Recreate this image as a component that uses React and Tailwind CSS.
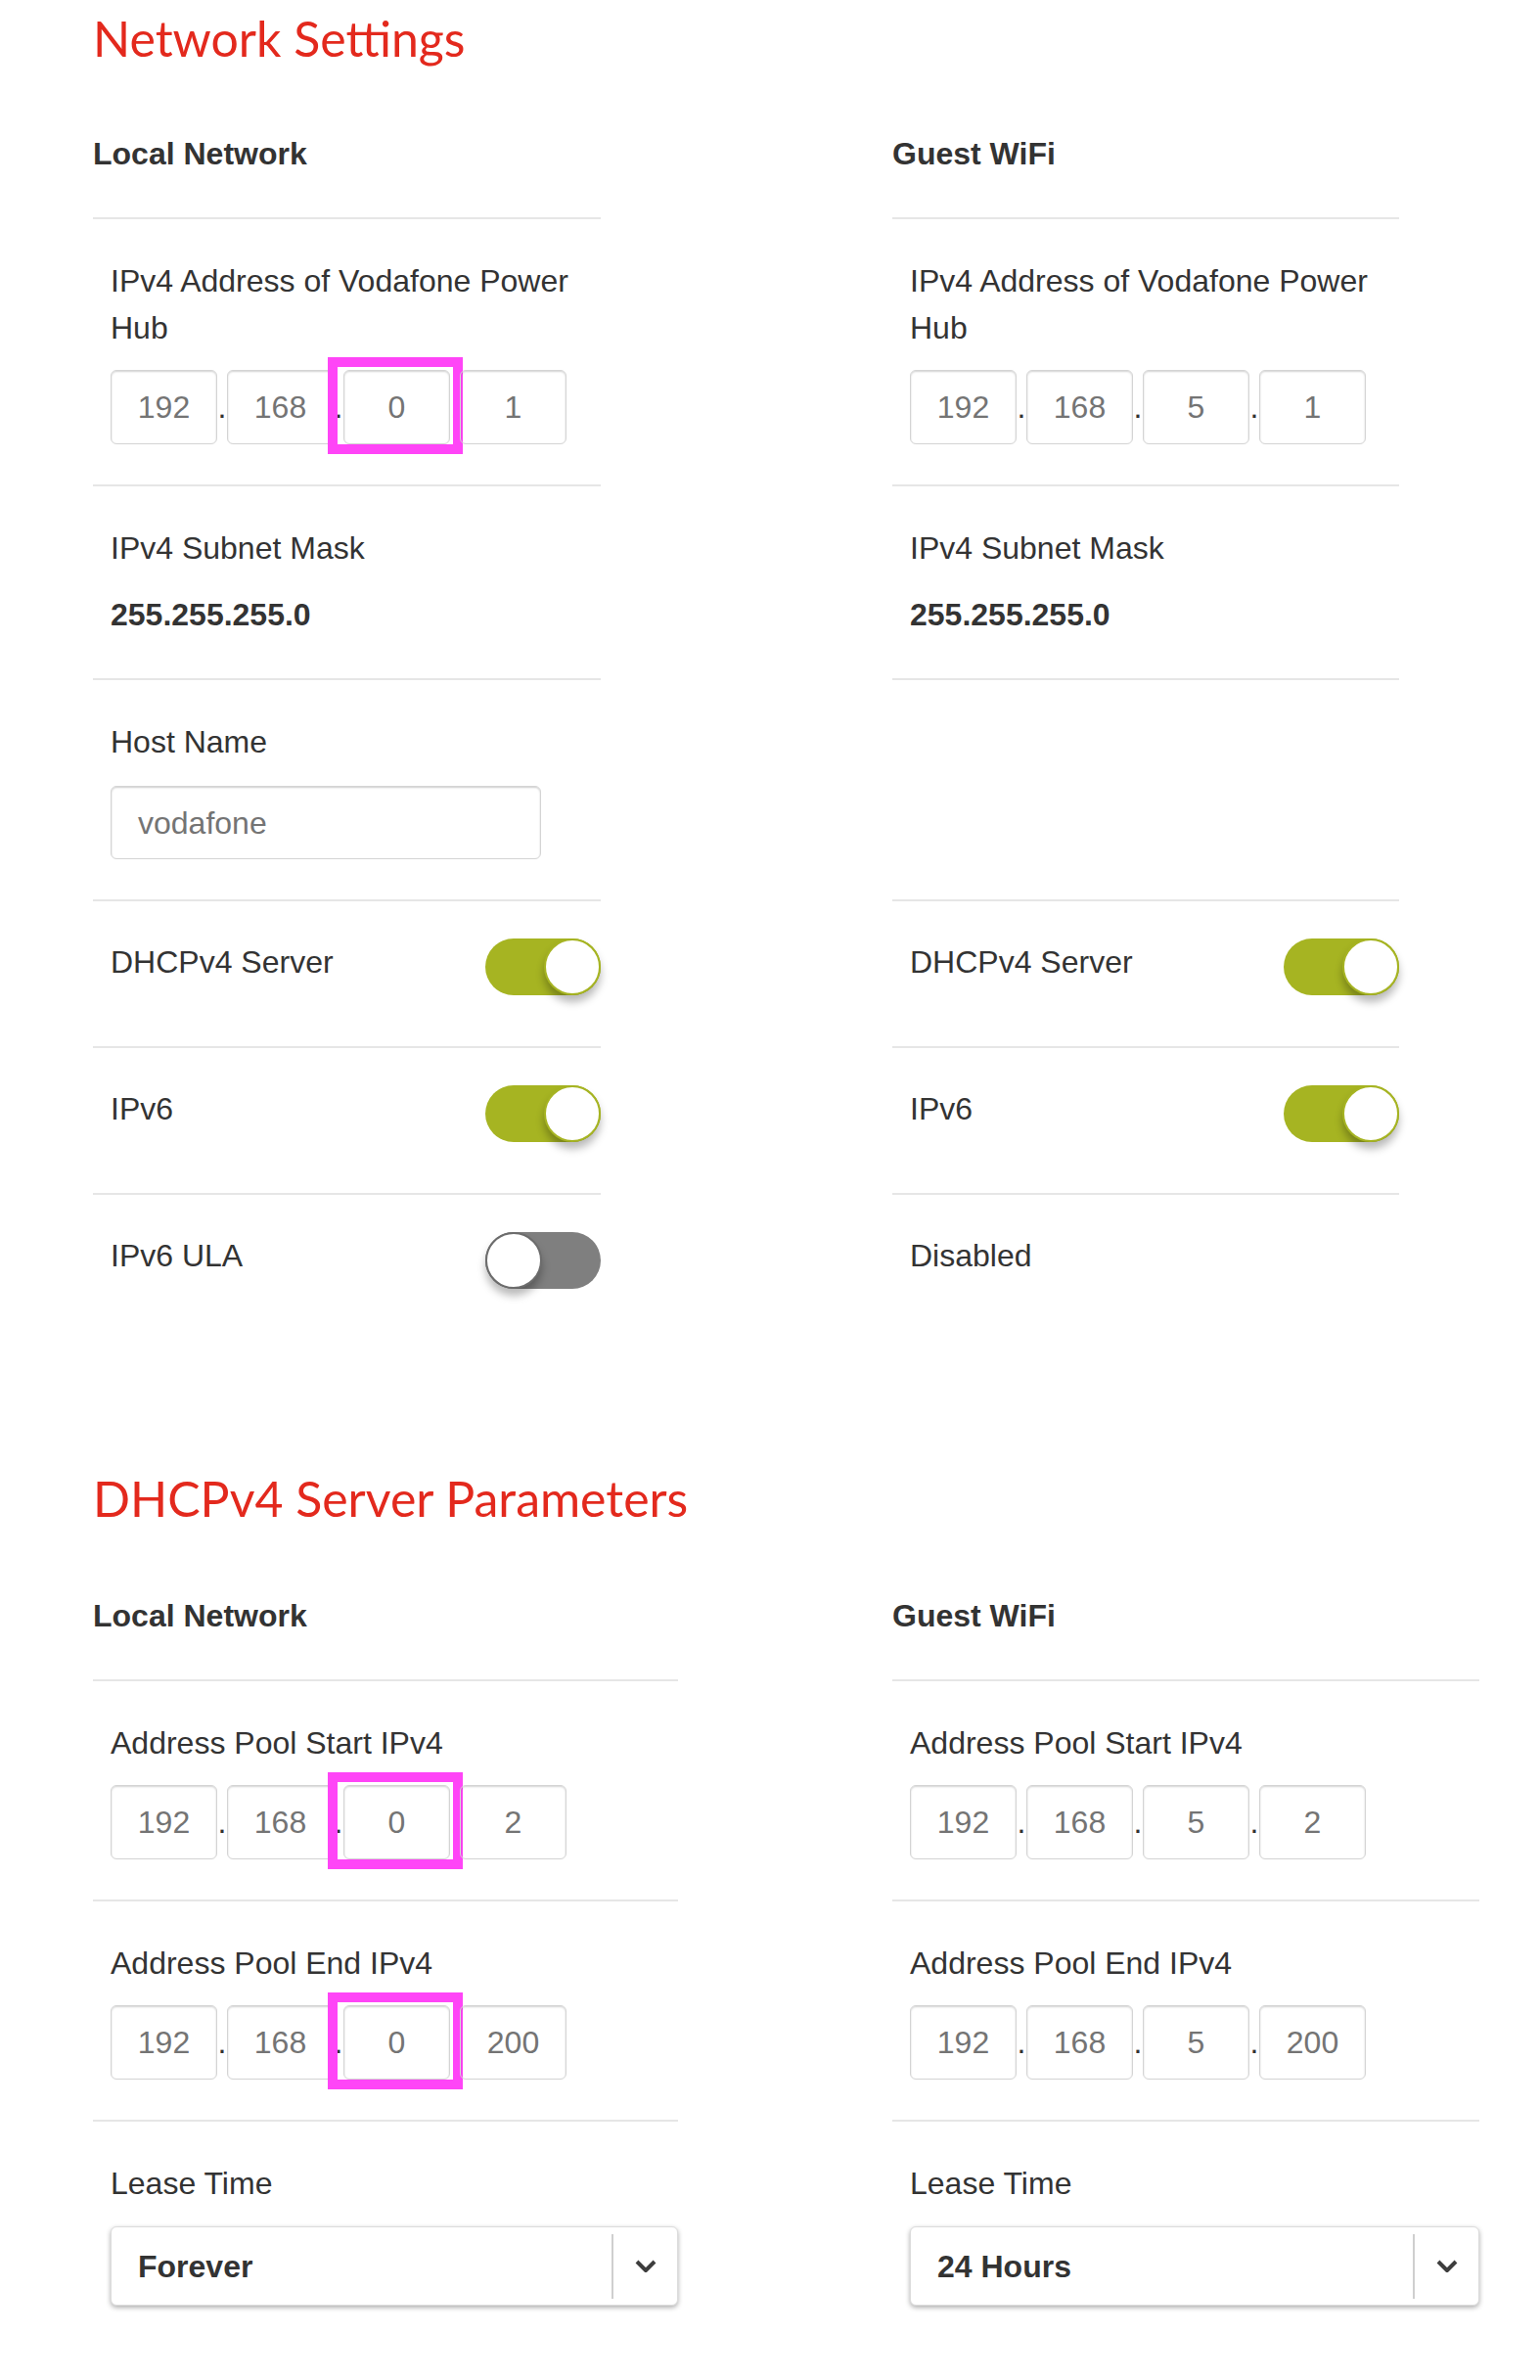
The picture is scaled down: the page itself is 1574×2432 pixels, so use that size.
import React from "react";

const sans = "font-['Liberation_Sans',Arial,sans-serif]";

const IpBox = ({ value, marked }) => (
  <div className="relative">
    <div className="w-[109px] h-[76px] rounded-[6px] border border-[#d4d4d4] shadow-[inset_0_1px_2px_rgba(0,0,0,0.18)] flex items-center justify-center text-[32px] text-[#747474]">
      {value}
    </div>
    {marked ? (
      <div className="absolute left-[-16px] right-[-13px] top-[-13px] bottom-[-10px] border-[10px] border-[#ff45f7]" />
    ) : null}
  </div>
);

const IpField = ({ parts, markThird }) => (
  <div className="flex items-baseline mt-[19px]">
    {parts.map((part, i) => (
      <React.Fragment key={i}>
        {i > 0 && (
          <span className="w-[10px] text-center text-[32px] leading-none text-[#333]">
            .
          </span>
        )}
        <IpBox value={part} marked={markThird && i === 2} />
      </React.Fragment>
    ))}
  </div>
);

const Toggle = ({ on }) => (
  <div
    className={
      on
        ? "w-[118px] h-[58px] rounded-full bg-[#a6b422] flex items-center justify-end shrink-0"
        : "w-[118px] h-[58px] rounded-full bg-[#7f7f7f] flex items-center justify-start shrink-0"
    }
  >
    <div
      className={
        on
          ? "w-[58px] h-[58px] rounded-full bg-white border-2 border-[#a6b422] shadow-[0_7px_8px_rgba(0,0,0,0.28)]"
          : "w-[58px] h-[58px] rounded-full bg-white border-2 border-[#6c6c6c] shadow-[0_7px_8px_rgba(0,0,0,0.28)]"
      }
    />
  </div>
);

const Heading = ({ children }) => (
  <div className="text-[32px] font-bold leading-[48px] text-[#333] pb-[41px] border-b-2 border-[#e6e6e6]">
    {children}
  </div>
);

const Cell = ({ label, children, last }) => (
  <div
    className={
      last
        ? "pl-[18px] pt-[39px] pb-[41px]"
        : "pl-[18px] pt-[39px] pb-[41px] border-b-2 border-[#e6e6e6]"
    }
  >
    {label ? (
      <div className="text-[32px] leading-[48px] text-[#333]">{label}</div>
    ) : null}
    {children}
  </div>
);

// toggle sits a little above the row middle, label lines up with its top
const ToggleCell = ({ label, on, last }) => (
  <div
    className={
      last
        ? "pl-[18px] pt-[38px] pb-[52px] flex items-start justify-between"
        : "pl-[18px] pt-[38px] pb-[52px] flex items-start justify-between border-b-2 border-[#e6e6e6]"
    }
  >
    <div className="text-[32px] leading-[48px] text-[#333]">{label}</div>
    <Toggle on={on} />
  </div>
);

const TextCell = ({ label, last }) => (
  <div
    className={
      last
        ? "pl-[18px] pt-[38px] pb-[52px] min-h-[148px]"
        : "pl-[18px] pt-[38px] pb-[52px] min-h-[148px] border-b-2 border-[#e6e6e6]"
    }
  >
    <div className="text-[32px] leading-[48px] text-[#333]">{label}</div>
  </div>
);

const Chevron = () => (
  <svg width="22" height="14" viewBox="0 0 22 14" fill="none">
    <path
      d="M2 2 L11 11 L20 2"
      stroke="#3d3d3d"
      strokeWidth="4"
      strokeLinejoin="round"
    />
  </svg>
);

const Select = ({ value }) => (
  <div className="mt-[20px] h-[81px] rounded-[6px] border border-[#dcdcdc] bg-white shadow-[0_2px_5px_rgba(0,0,0,0.32)] flex items-center">
    <div className="flex-1 pl-[27px] text-[32px] font-bold text-[#333]">
      {value}
    </div>
    <div className="w-[67px] h-[66px] border-l-2 border-[#cfcfcf] flex items-center justify-center">
      <Chevron />
    </div>
  </div>
);

const Title = ({ children, className }) => (
  <h1
    className={
      "font-['Lato','Liberation_Sans',sans-serif] text-[50px] leading-[60px] font-normal text-[#e3291d] " +
      className
    }
  >
    {children}
  </h1>
);

export default function App() {
  return (
    <div className={`${sans} bg-white min-h-[2432px] pl-[95px]`}>
      {/* Network Settings */}
      <Title className="pt-[9px]">Network Settings</Title>
      <div className="grid grid-cols-[519px_518px] gap-x-[298px] mt-[64px]">
        <Heading>Local Network</Heading>
        <Heading>Guest WiFi</Heading>

        <Cell label="IPv4 Address of Vodafone Power Hub">
          <IpField parts={["192", "168", "0", "1"]} markThird />
        </Cell>
        <Cell label="IPv4 Address of Vodafone Power Hub">
          <IpField parts={["192", "168", "5", "1"]} />
        </Cell>

        <Cell label="IPv4 Subnet Mask">
          <div className="mt-[20px] text-[32px] leading-[48px] font-bold text-[#333]">
            255.255.255.0
          </div>
        </Cell>
        <Cell label="IPv4 Subnet Mask">
          <div className="mt-[20px] text-[32px] leading-[48px] font-bold text-[#333]">
            255.255.255.0
          </div>
        </Cell>

        <Cell label="Host Name">
          <div className="mt-[21px] w-[440px] h-[75px] rounded-[6px] border border-[#d4d4d4] shadow-[inset_0_1px_2px_rgba(0,0,0,0.2)] flex items-center pl-[27px] text-[32px] text-[#747474]">
            vodafone
          </div>
        </Cell>
        <Cell />

        <ToggleCell label="DHCPv4 Server" on />
        <ToggleCell label="DHCPv4 Server" on />

        <ToggleCell label="IPv6" on />
        <ToggleCell label="IPv6" on />

        <ToggleCell label="IPv6 ULA" on={false} last />
        <TextCell label="Disabled" last />
      </div>

      {/* DHCPv4 Server Parameters */}
      <Title className="mt-[132px]">DHCPv4 Server Parameters</Title>
      <div className="grid grid-cols-[598px_600px] gap-x-[219px] mt-[66px] pb-[70px]">
        <Heading>Local Network</Heading>
        <Heading>Guest WiFi</Heading>

        <Cell label="Address Pool Start IPv4">
          <IpField parts={["192", "168", "0", "2"]} markThird />
        </Cell>
        <Cell label="Address Pool Start IPv4">
          <IpField parts={["192", "168", "5", "2"]} />
        </Cell>

        <Cell label="Address Pool End IPv4">
          <IpField parts={["192", "168", "0", "200"]} markThird />
        </Cell>
        <Cell label="Address Pool End IPv4">
          <IpField parts={["192", "168", "5", "200"]} />
        </Cell>

        <Cell label="Lease Time" last>
          <Select value="Forever" />
        </Cell>
        <Cell label="Lease Time" last>
          <Select value="24 Hours" />
        </Cell>
      </div>
    </div>
  );
}
